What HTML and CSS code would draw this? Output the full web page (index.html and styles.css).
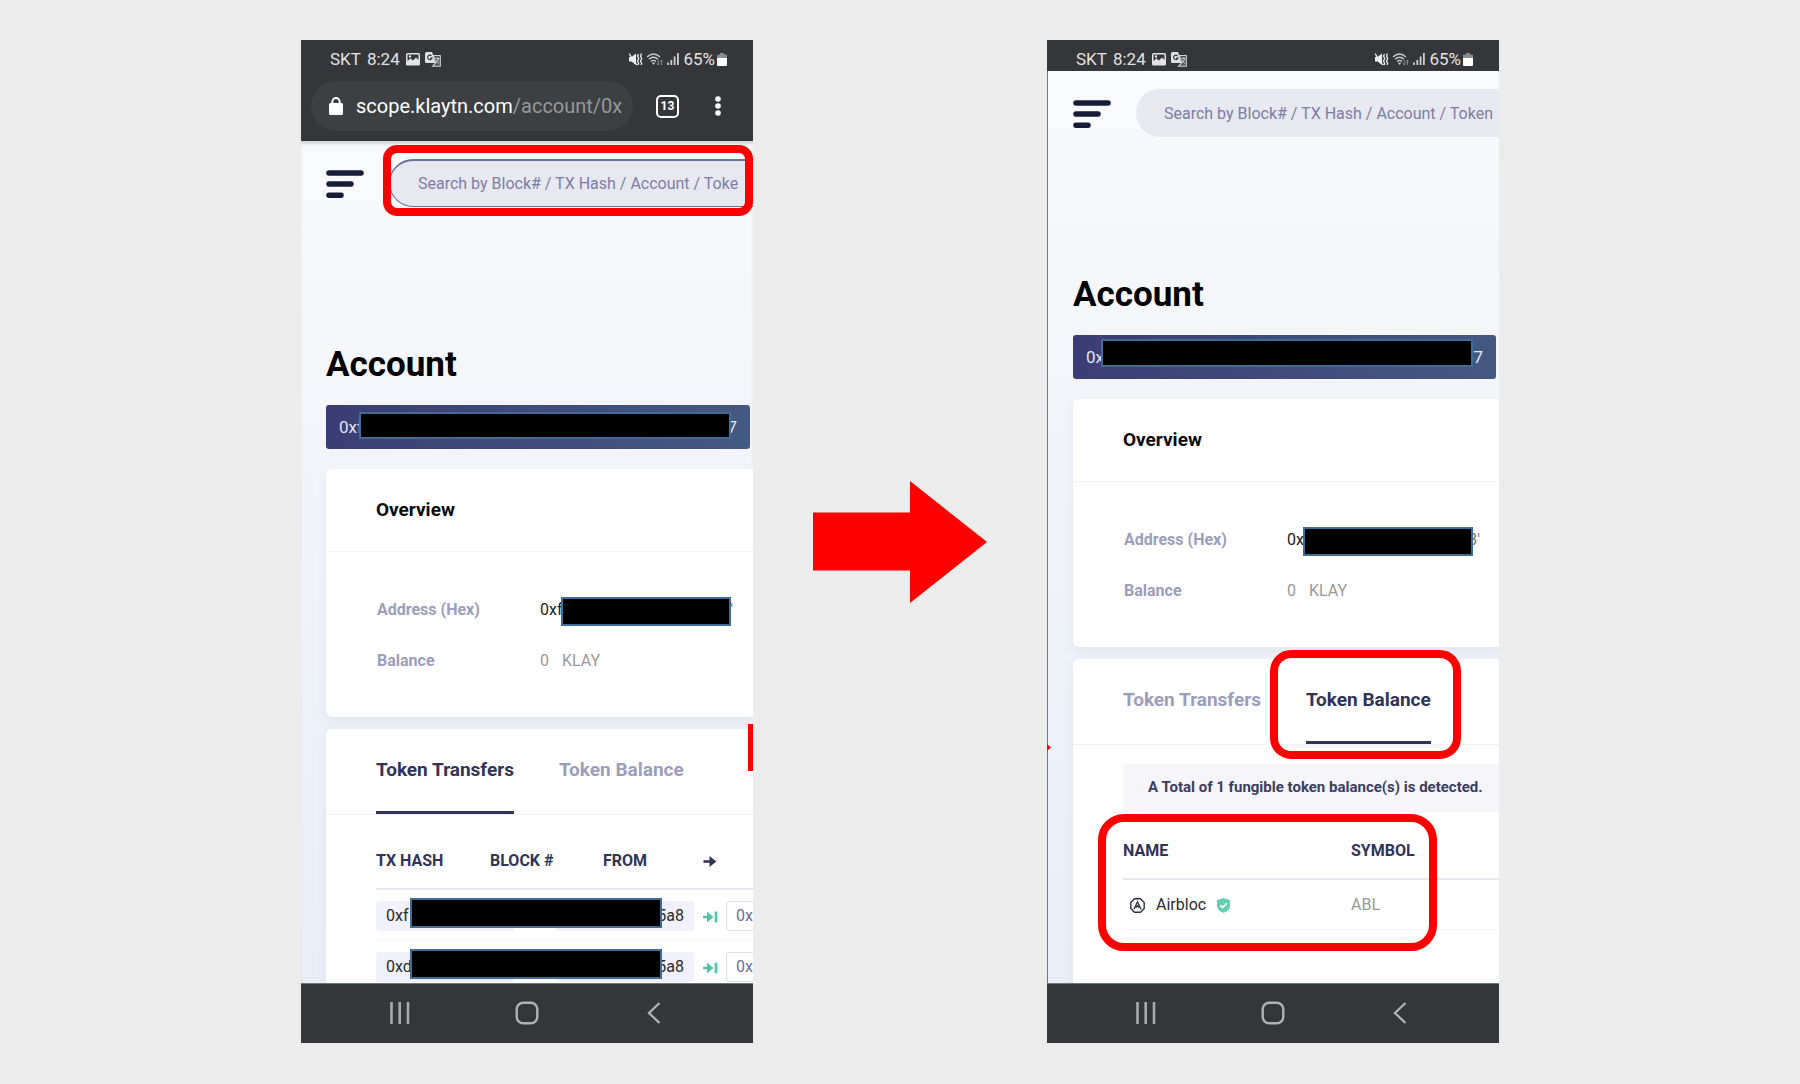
FILE: index.html
```html
<!DOCTYPE html>
<html lang="en">
<head>
<meta charset="utf-8">
<title>Klaytn Scope token balance guide</title>
<link rel="stylesheet" href="styles.css">
</head>
<body>
<svg class="sprite" aria-hidden="true">
  <symbol id="picture" viewBox="0 0 14 13"><path fill="#e4e4e4" fill-rule="evenodd" d="M1.500 0H12.500Q14 0 14 1.500V11Q14 12.500 12.500 12.500H1.500Q0 12.500 0 11V1.500Q0 0 1.500 0ZM1.500 1.500V8L4.500 5.500L7 7.500L10 4.500L12.500 7V1.500ZM4 2.300A1.200 1.200 0 1 1 4 4.700A1.200 1.200 0 1 1 4 2.300Z"/></symbol>
  <symbol id="translate" viewBox="0 0 16 15"><path fill="#e0e0e0" d="M1.500 0H7L11 11H1.500Q0 11 0 9.500V1.500Q0 0 1.500 0Z"/><path fill="none" stroke="#36373a" stroke-width="1.200" d="M6.500 3.800A2.200 2.200 0 1 0 7 6H5"/><path fill="#55565a" stroke="#d0d0d0" stroke-width="1.100" d="M8.500 3.500H15.300V14.300H7.500L10.500 11Z"/><path fill="none" stroke="#d0d0d0" d="M10.500 6.500H14.300M12.500 5.500V6.500M13.500 7Q13 9.500 10.800 11M11 8Q12 10.300 14 11.500"/></symbol>
  <symbol id="mute" viewBox="0 0 14 13"><path fill="#ededed" d="M0 4H2.500L7 0.500V12L2.500 8.500H0Z"/><path stroke="#ededed" stroke-width="1.300" fill="none" d="M0 0.500L8 12M9.500 1L8.500 3L9.700 5.500L8.500 8L9.700 10.500L9 12M12.500 0.500L11.500 3L12.700 5.500L11.500 8L12.700 10.500L12 12"/></symbol>
  <symbol id="wifi" viewBox="0 0 18 13"><g fill="none" stroke="#c9c9c9" stroke-width="1.300"><path d="M1 4Q7.500 -2 14 4"/><path d="M3 6.300Q7.500 2.200 12 6.300"/><path d="M5 8.500Q7.500 6.300 10 8.500"/></g><path fill="#c9c9c9" d="M5.800 9.500H9.200L7.500 12Z"/><path stroke="#8b8c8e" d="M12.300 7V12M15.500 7V12M11 10.500L12.300 12L13.600 10.500M14.200 8.500L15.500 7L16.800 8.500" fill="none"/></symbol>
  <symbol id="signal" viewBox="0 0 12 12"><path stroke="#d0d0d0" stroke-width="1.800" d="M1 12V9.500M4.300 12V7M7.600 12V3.500M10.900 12V0"/></symbol>
  <symbol id="battery" viewBox="0 0 10 13"><path fill="#8a8b8d" d="M3 0H7V1.500H9Q10 1.500 10 2.500V5H0V2.500Q0 1.500 1 1.500H3Z"/><path fill="#fff" d="M0 5H10V12Q10 13 9 13H1Q0 13 0 12Z"/></symbol>
  <symbol id="menu" viewBox="0 0 38 30"><path stroke="#141c38" stroke-width="5.500" stroke-linecap="round" d="M3 5H35M3 16H25M3 27.200H15"/></symbol>
  <symbol id="recents" viewBox="0 0 22 22"><path stroke="#aaaaab" stroke-width="2.600" d="M2.500 0V22M10.700 0V22M19 0V22"/></symbol>
  <symbol id="home" viewBox="0 0 24 24"><rect x="1.700" y="1.700" width="20.600" height="20.600" rx="6.500" fill="none" stroke="#b2b2b3" stroke-width="2.400"/></symbol>
  <symbol id="back" viewBox="0 0 14 22"><path fill="none" stroke="#b2b2b3" stroke-width="2.300" d="M12.500 1L2 11L12.500 21"/></symbol>
  <symbol id="arrow" viewBox="0 0 14 11"><path fill="none" stroke="#303459" stroke-width="2.600" d="M0.500 5.500H11"/><path fill="#303459" d="M6.500 0L13.300 5.500L6.500 11Z"/></symbol>
  <symbol id="arrow-end" viewBox="0 0 16 12"><path fill="none" stroke="#53c3a5" stroke-width="2.600" d="M1 6H9M14 0.500V11.500"/><path fill="#53c3a5" d="M5 0.500L11.500 6L5 11.500Z"/></symbol>
</svg>
<main class="guide">
  <section class="phone phone-before">
    <div class="status">
      <span>SKT</span><span>8:24</span>
      <svg width="14" height="13"><use href="#picture"/></svg><svg width="16" height="15"><use href="#translate"/></svg>
      <div class="status-right">
        <svg width="14" height="13"><use href="#mute"/></svg><svg width="18" height="13"><use href="#wifi"/></svg><svg width="12" height="12"><use href="#signal"/></svg><span>65%</span><svg width="10" height="13"><use href="#battery"/></svg>
      </div>
    </div>
    <div class="browser">
      <div class="url">
        <svg width="14" height="18" viewBox="0 0 14 18"><path fill="none" stroke="#fff" stroke-width="1.900" d="M3.300 7V4.700A3.700 3.700 0 0 1 10.700 4.700V7"/><rect y="6" width="14" height="12" rx="1.500" fill="#fff"/></svg>
        <a href="#account">scope.klaytn.com<span class="path">/account/0x</span></a>
      </div>
      <button class="tab-count" aria-label="Open tabs">13</button>
      <button class="more" aria-label="More"><svg width="6" height="20" viewBox="0 0 6 20"><g fill="#fff"><circle cx="3" cy="3" r="2.800"/><circle cx="3" cy="10" r="2.800"/><circle cx="3" cy="17" r="2.800"/></g></svg></button>
    </div>
    <div class="page">
      <header class="topbar">
        <button aria-label="Menu"><svg width="38" height="30"><use href="#menu"/></svg></button>
        <input class="search focused" type="search" aria-label="Search" placeholder="Search by Block# / TX Hash / Account / Toke">
      </header>
      <h1 id="account">Account</h1>
      <div class="address-bar"><span>0xf</span><span>67</span><i class="redaction"></i></div>
      <section class="card">
        <h2>Overview</h2>
        <dl>
          <div><dt>Address (Hex)</dt><dd class="hex"><span>0xf</span><span class="tail">3'</span><i class="redaction"></i></dd></div>
          <div><dt>Balance</dt><dd class="balance"><span>0</span><span>KLAY</span></dd></div>
        </dl>
      </section>
      <section class="card tokens">
        <nav class="tabs"><button class="active">Token Transfers</button><button>Token Balance</button></nav>
        <table class="transfers">
          <colgroup><col class="c-hash"><col class="c-block"><col class="c-from"><col class="c-arrow"><col class="c-to"></colgroup>
          <thead><tr><th>TX HASH</th><th>BLOCK #</th><th class="mid">FROM</th><th class="mid"><svg width="14" height="11"><use href="#arrow"/></svg></th><th></th></tr></thead>
          <tbody>
            <tr><td><a class="chip" href="#account">0xf</a><i class="redaction"></i></td><td></td><td><a class="chip end" href="#account">5a8</a></td><td class="mid"><svg width="16" height="12"><use href="#arrow-end"/></svg></td><td><a class="chip outline" href="#account">0x</a></td></tr>
            <tr><td><a class="chip" href="#account">0xd</a><i class="redaction"></i></td><td></td><td><a class="chip end" href="#account">5a8</a></td><td class="mid"><svg width="16" height="12"><use href="#arrow-end"/></svg></td><td><a class="chip outline" href="#account">0x</a></td></tr>
          </tbody>
        </table>
      </section>
    </div>
    <nav class="keys">
      <button aria-label="Recents"><svg width="22" height="22"><use href="#recents"/></svg></button>
      <button aria-label="Home"><svg width="24" height="24"><use href="#home"/></svg></button>
      <button aria-label="Back"><svg width="14" height="22"><use href="#back"/></svg></button>
    </nav>
    <i class="highlight highlight-search"></i>
    <i class="edge-mark"></i>
  </section>

  <div class="step"><svg viewBox="0 0 174 122"><path fill="#f00" d="M0 31.500H97V0L174 61L97 122V89.500H0Z"/></svg></div>

  <section class="phone phone-after">
    <div class="status">
      <span>SKT</span><span>8:24</span>
      <svg width="14" height="13"><use href="#picture"/></svg><svg width="16" height="15"><use href="#translate"/></svg>
      <div class="status-right">
        <svg width="14" height="13"><use href="#mute"/></svg><svg width="18" height="13"><use href="#wifi"/></svg><svg width="12" height="12"><use href="#signal"/></svg><span>65%</span><svg width="10" height="13"><use href="#battery"/></svg>
      </div>
    </div>
    <div class="page">
      <header class="topbar">
        <button aria-label="Menu"><svg width="38" height="30"><use href="#menu"/></svg></button>
        <input class="search" type="search" aria-label="Search" placeholder="Search by Block# / TX Hash / Account / Token">
      </header>
      <h1>Account</h1>
      <div class="address-bar"><span>0xf</span><span>67</span><i class="redaction"></i></div>
      <section class="card">
        <h2>Overview</h2>
        <dl>
          <div><dt>Address (Hex)</dt><dd class="hex"><span>0xf</span><span class="tail">3'</span><i class="redaction"></i></dd></div>
          <div><dt>Balance</dt><dd class="balance"><span>0</span><span>KLAY</span></dd></div>
        </dl>
      </section>
      <section class="card tokens">
        <nav class="tabs"><button>Token Transfers</button><button class="active">Token Balance</button></nav>
        <p class="notice">A Total of 1 fungible token balance(s) is detected.</p>
        <table class="balances">
          <colgroup><col class="c-name"><col></colgroup>
          <thead><tr><th>NAME</th><th>SYMBOL</th></tr></thead>
          <tbody><tr><td><a class="token" href="#account">
            <svg width="15" height="15" viewBox="0 0 15 15"><g fill="none" stroke="#32353e" stroke-width="1.400"><path d="M4.500 0.800H10.500L14.200 4.500V10.500L10.500 14.200H4.500L0.800 10.500V4.500Z"/><path d="M4 11.200L7.500 3.800L11 11.200M5.800 9.500L7.500 7.800L9.200 9.500"/></g></svg>
            <span>Airbloc</span>
            <svg width="13" height="15" viewBox="0 0 13 15"><path fill="#63ceb1" d="M6.500 0L13 2.300V7.500Q13 12.300 6.500 15Q0 12.300 0 7.500V2.300Z"/><path fill="none" stroke="#fff" stroke-width="1.700" d="M3.400 7.300L5.700 9.600L9.800 5.300"/></svg></a></td><td class="symbol">ABL</td></tr></tbody>
        </table>
      </section>
    </div>
    <nav class="keys">
      <button aria-label="Recents"><svg width="22" height="22"><use href="#recents"/></svg></button>
      <button aria-label="Home"><svg width="24" height="24"><use href="#home"/></svg></button>
      <button aria-label="Back"><svg width="14" height="22"><use href="#back"/></svg></button>
    </nav>
    <i class="highlight highlight-tab"></i>
    <i class="highlight highlight-token"></i>
    <i class="edge-mark"></i>
  </section>
</main>
</body>
</html>
```
FILE: styles.css
```css
* { box-sizing: border-box; }
body { margin: 0; background: #ececec; font-family: Roboto, "Liberation Sans", sans-serif; font-size: 16px; line-height: 24px; color: #2b2b2b; }
svg { display: block; flex: none; }
button { padding: 0; border: 0; background: none; font: inherit; color: inherit; }
a { color: inherit; text-decoration: none; }
h1, h2, p, dl, dd { margin: 0; }
.sprite { position: absolute; width: 0; height: 0; }

.guide {
  display: grid;
  grid-template-columns: minmax(0, 301fr) minmax(0, 452fr) minmax(0, 294fr) minmax(0, 452fr) minmax(0, 301fr);
  min-height: 100vh;
  padding: 40px 0 41px;
}
.phone { position: relative; display: flex; flex-direction: column; overflow: hidden; background: #35363a; }
.phone-before { grid-column: 2; }
.phone-after { grid-column: 4; }
.step { align-self: center; padding: 0 60px; }
.step svg { width: 100%; }

/* Android status bar */
.status { display: flex; align-items: center; gap: 5px; height: 31px; padding: 7px 26px 0 29px; color: #e2e2e2; font-size: 17px; }
.status > span + span { margin: 0 1px; }
.status-right { display: flex; align-items: center; gap: 3px; margin-left: auto; }
.status-right span { margin: 0 -1px 0 1px; }

/* Browser toolbar */
.browser { display: flex; align-items: center; height: 70px; padding: 0 32px 0 10px; }
.url { display: flex; flex: 1; align-items: center; gap: 13px; height: 50px; padding: 0 10px 0 18px; border-radius: 25px; background: #3c4043; overflow: hidden; color: #fff; font-size: 20px; white-space: nowrap; }
.path { color: #96989a; }
.tab-count { width: 23px; height: 23px; margin: 0 36px 0 23px; border: 2px solid #fff; border-radius: 5px; color: #fff; font-size: 12px; font-weight: 700; line-height: 18px; }

/* Explorer page */
.page { display: flex; flex: 1; flex-direction: column; padding: 18px 0 0 25px; overflow: hidden; background: linear-gradient(#f9fafc, #f5f6fa 28%, #eff2f9 60%, #e8edf7); }
.phone-before .page { box-shadow: inset 0 4px 4px -2px #c9cacd; }
.phone-after .page { border-left: 1px solid #777; }
.topbar { display: flex; align-items: center; gap: 25px; }
.search { flex: none; width: 520px; height: 48px; padding: 0 28px; border: 0; border-radius: 24px; background: #e8e8f1; font: 16px/24px Roboto, sans-serif; }
.search::placeholder { color: #7b7da6; opacity: 1; }
.focused { border: 1px solid #6a6f9e; border-top-width: 2px; }
h1 { margin-top: 138px; color: #000; font-size: 35px; line-height: 40px; }
.address-bar { position: relative; display: flex; flex: none; align-items: center; justify-content: space-between; height: 44px; margin: 20px 3px 20px 0; padding: 0 13px; border-radius: 3px; background: linear-gradient(100deg, #3a3d75, #435a82); color: #e4e6f1; font-size: 17px; }
.redaction { position: absolute; border: 2px solid #3f6d98; background: #000; }
.address-bar .redaction { top: 7px; right: 19px; left: 33px; height: 27px; }
.phone-after .address-bar .redaction { top: 4px; right: 23px; left: 28px; height: 28px; }

.card { margin-bottom: 12px; border-radius: 6px 0 0 6px; background: #fff; box-shadow: 0 4px 10px #d9dce899; }
h2 { padding: 29px 50px; border-bottom: 1px solid #f3f3f5; color: #0a0a0a; font-size: 19px; line-height: 24px; }
dl { display: grid; gap: 27px; padding: 46px 0 44px 51px; }
dl div { display: flex; }
dt { width: 163px; color: #9b9dbc; font-weight: 700; }
.hex { position: relative; display: flex; justify-content: space-between; width: 193px; color: #222; }
.tail { color: #777; }
.hex .redaction { top: -1px; left: 21px; width: 170px; height: 29px; }
.phone-after .hex .redaction { left: 16px; height: 29px; }
.balance { display: flex; gap: 13px; color: #999; }

.tokens { flex: 1; margin-bottom: 0; border-bottom-left-radius: 0; }
.tabs { display: flex; gap: 45px; padding: 29px 50px 0; border-bottom: 1px solid #f0f0f3; }
.tabs button { padding-bottom: 29px; border-bottom: 3px solid transparent; color: #9b9dbc; font-size: 19px; font-weight: 700; line-height: 24px; }
.tabs .active { border-color: #303459; color: #303459; }
table { table-layout: fixed; border-collapse: separate; border-spacing: 0; margin-left: 50px; }
th, td { padding: 0; text-align: left; }
th { border-bottom: 2px solid #e6e6ec; color: #303459; font-size: 16px; }
td { border-bottom: 1px solid #f6f6f8; }
.mid { text-align: center; }
.mid svg { display: inline-block; vertical-align: middle; }
.transfers { width: 470px; }
.transfers th { padding: 34px 0 15px; }
.transfers td { position: relative; padding: 11px 0 9px; }
.transfers tr:last-child td { padding-bottom: 0; border-bottom: 0; }
.c-hash { width: 114px; }
.c-block { width: 66px; }
.c-from { width: 138px; }
.c-arrow { width: 32px; }
.c-to { width: 120px; }
.chip { display: block; width: 138px; height: 30px; padding: 0 10px; border-radius: 3px; background: #f0f1fc; line-height: 30px; }
.end { text-align: right; }
.outline { padding: 0 9px; border: 1px solid #dddeeb; background: #fff; color: #6c6f9e; line-height: 28px; }
.transfers .redaction { z-index: 1; top: 8px; left: 34px; width: 252px; height: 30px; }

.notice { height: 48px; margin: 19px 0 0 50px; padding: 0 25px; background: #f5f5fa; color: #3a3d60; font-size: 15px; font-weight: 700; line-height: 46px; white-space: nowrap; overflow: hidden; }
.balances { width: 470px; }
.balances th { padding: 27px 0 15px; }
.balances td { padding: 13px 0 12px; }
.c-name { width: 228px; }
.token { display: flex; align-items: center; gap: 11px; padding-left: 7px; }
.symbol { color: #999; }

/* Android navigation keys */
.keys { display: flex; flex: none; height: 60px; padding: 0 36px 2px; border-top: 1px solid #6c7678; }
.keys button { display: flex; flex: 1; align-items: center; justify-content: center; }

/* Annotations laid over the screens */
.highlight { position: absolute; z-index: 2; border: 8px solid #f00; }
.highlight-search { top: 105px; right: 0; left: 82px; height: 71px; border-radius: 14px; }
.highlight-tab { top: 610px; left: 223px; width: 191px; height: 109px; border-radius: 21px; }
.highlight-token { top: 774px; left: 51px; width: 339px; height: 137px; border-radius: 26px; }
.edge-mark { position: absolute; background: #f00; }
.phone-before .edge-mark { top: 684px; right: 0; width: 5px; height: 47px; }
.phone-after .edge-mark { top: 704px; left: 0; width: 4px; height: 7px; clip-path: polygon(0 0, 100% 50%, 0 100%); }
```
